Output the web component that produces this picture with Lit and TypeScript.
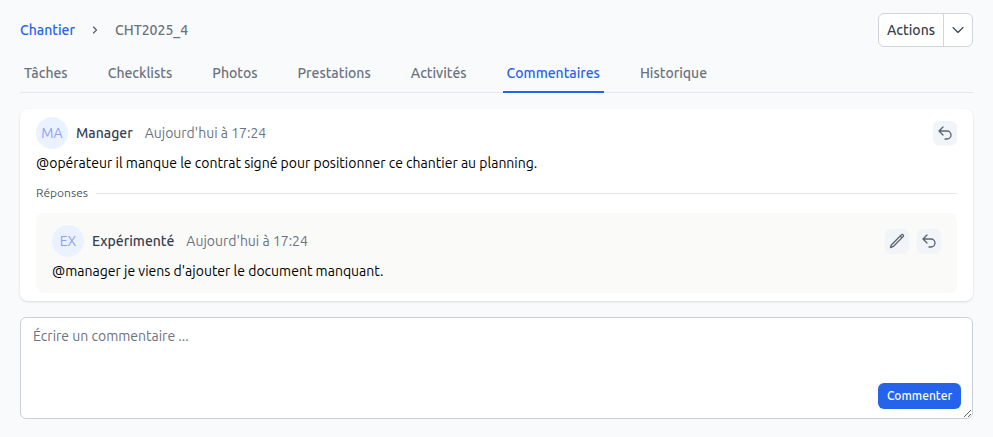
import { LitElement, html, css, svg } from "lit";
import { customElement } from "lit/decorators.js";

const replyIcon = svg`<path d="M9 15 3 9m0 0 6-6M3 9h12a6 6 0 0 1 0 12h-3"/>`;
const pencilIcon = svg`<path d="m16.862 4.487 1.687-1.688a1.875 1.875 0 1 1 2.652 2.652L6.832 19.82a4.5 4.5 0 0 1-1.897 1.13l-2.685.8.8-2.685a4.5 4.5 0 0 1 1.13-1.897L16.863 4.487Zm0 0L19.5 7.125"/>`;

@customElement("app-root")
export class AppRoot extends LitElement {
  static styles = css`
    :host { display: block; width: 993px; height: 437px; background: #f9fafb; box-sizing: border-box; padding: 0 20px; font-family: Ubuntu, "Noto Sans", sans-serif; font-size: 14px; color: #111827; overflow: hidden; }
    * { box-sizing: border-box; }
    .top { display: flex; justify-content: space-between; align-items: center; padding-top: 13px; height: 47px; }
    .crumbs { display: flex; align-items: center; line-height: 20px; font-weight: 500; }
    .link { color: #2563eb; }
    .cur { color: #6b7280; }
    .sep { width: 40px; display: flex; justify-content: center; }
    .sep svg { width: 12px; height: 12px; fill: none; stroke: #4b5563; stroke-width: 2.2; stroke-linecap: round; stroke-linejoin: round; }
    .actions { display: flex; width: 95px; height: 34px; background: #fff; border: 1px solid #d1d5db; border-radius: 6px; color: #374151; font-weight: 500; }
    .actions .lbl { width: 65px; display: flex; align-items: center; justify-content: center; border-right: 1px solid #d1d5db; }
    .actions .chev { flex: 1; display: flex; align-items: center; justify-content: center; }
    .chev svg { width: 16px; height: 16px; fill: none; stroke: #374151; stroke-width: 1.6; stroke-linecap: round; stroke-linejoin: round; }
    .tabs { display: flex; gap: 32px; margin-top: 14px; height: 32px; border-bottom: 1px solid #e5e7eb; }
    .tab { padding: 0 4px; height: 32px; line-height: 25px; color: #6b7280; font-weight: 500; border-bottom: 2px solid transparent; }
    .tab.on { color: #2563eb; border-bottom-color: #2563eb; }
    .card { margin-top: 16px; height: 192px; background: #fff; border-radius: 8px; box-shadow: 0 1px 3px rgba(0,0,0,.1), 0 1px 2px -1px rgba(0,0,0,.1); padding: 8px 16px; }
    .head { display: flex; align-items: center; height: 32px; }
    .av { width: 32px; height: 32px; border-radius: 50%; background: #ebf2ff; color: #8ba0f5; display: flex; align-items: center; justify-content: center; margin-right: 8px; }
    .name { font-weight: 500; color: #374151; margin-right: 12px; }
    .time { color: #6b7280; }
    .btns { margin-left: auto; display: flex; gap: 8px; }
    .ib { width: 24px; height: 24px; border-radius: 6px; background: #f1f5f9; display: flex; align-items: center; justify-content: center; box-shadow: 0 1px 2px rgba(0,0,0,.03); }
    .ib svg { width: 16px; height: 16px; fill: none; stroke: #5b6472; stroke-width: 2; stroke-linecap: round; stroke-linejoin: round; }
    .msg { margin-top: 4px; line-height: 20px; color: #000; }
    .div { display: flex; align-items: center; gap: 8px; margin-top: 11px; height: 16px; font-size: 12px; color: #4b5563; }
    .div::after { content: ""; flex: 1; height: 1px; background: #e5e7eb; margin-top: 3px; }
    .reply { margin-top: 13px; height: 80px; background: #fafaf9; border-radius: 8px; padding: 12px 16px 0; }
    .compose { position: relative; margin-top: 16px; height: 102px; }
    textarea { display: block; width: 100%; height: 102px; margin: 0; background: #fff; border: 1px solid #cbd0dc; border-radius: 6px; padding: 8px 12px; color: #111827; font: inherit; line-height: 20px; outline: none; }
    textarea::placeholder { color: #6b7280; opacity: 1; }
    .send { position: absolute; right: 12px; bottom: 10px; height: 26px; width: 83px; padding-bottom: 2px; background: #2563eb; color: #fff; border-radius: 6px; font-size: 12px; font-weight: 500; display: flex; align-items: center; justify-content: center; }
  `;

  private ib(icons: unknown) {
    return html`<div class="ib"><svg viewBox="0 0 24 24">${icons}</svg></div>`;
  }

  render() {
    const tabs = ["Tâches", "Checklists", "Photos", "Prestations", "Activités", "Commentaires", "Historique"];
    return html`
      <div class="top">
        <div class="crumbs">
          <span class="link">Chantier</span>
          <span class="sep"><svg viewBox="0 0 24 24"><path d="m9 6 6 6-6 6"/></svg></span>
          <span class="cur">CHT2025_4</span>
        </div>
        <div class="actions">
          <div class="lbl">Actions</div>
          <div class="chev"><svg viewBox="0 0 24 24"><path d="m19.5 8.25-7.5 7.5-7.5-7.5"/></svg></div>
        </div>
      </div>
      <div class="tabs">
        ${tabs.map((t) => html`<div class="tab ${t === "Commentaires" ? "on" : ""}">${t}</div>`)}
      </div>
      <div class="card">
        <div class="head">
          <div class="av">MA</div>
          <span class="name">Manager</span>
          <span class="time">Aujourd'hui à 17:24</span>
          <div class="btns">${this.ib(replyIcon)}</div>
        </div>
        <div class="msg">@opérateur il manque le contrat signé pour positionner ce chantier au planning.</div>
        <div class="div">Réponses</div>
        <div class="reply">
          <div class="head">
            <div class="av">EX</div>
            <span class="name">Expérimenté</span>
            <span class="time">Aujourd'hui à 17:24</span>
            <div class="btns">${this.ib(pencilIcon)}${this.ib(replyIcon)}</div>
          </div>
          <div class="msg">@manager je viens d'ajouter le document manquant.</div>
        </div>
      </div>
      <div class="compose">
        <textarea placeholder="Écrire un commentaire ..."></textarea>
        <div class="send">Commenter</div>
      </div>
    `;
  }
}
